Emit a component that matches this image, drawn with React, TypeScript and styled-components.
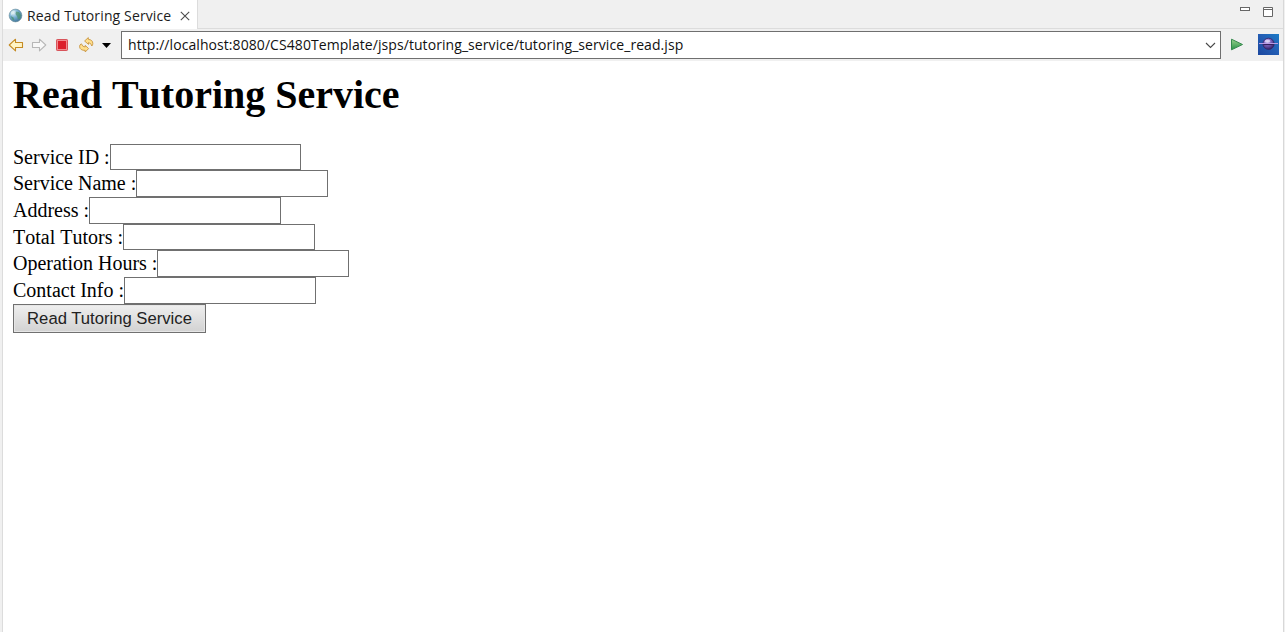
import React from 'react';
import styled, { createGlobalStyle } from 'styled-components';

const GlobalStyle = createGlobalStyle`
  *, *::before, *::after { box-sizing: border-box; }
  body { margin: 0; background: #f0f0f0; overflow: hidden; }
`;

const Frame = styled.div`
  height: 632px;
  width: 1285px;
  padding: 0 1px 0 2px;
  background: #f0f0f0;
`;

const View = styled.main`
  height: 100%;
  display: flex;
  flex-direction: column;
  border-left: 1px solid #dcdcdc;
  border-right: 1px solid #d8d8d8;
  background: #fff;
  font-kerning: none;
`;

const TabBar = styled.header`
  height: 29px;
  display: flex;
  justify-content: space-between;
  background: #f0f0f0;
`;

const Tab = styled.div`
  width: 195px;
  height: 29px;
  display: flex;
  align-items: center;
  padding: 2px 0 0 5px;
  background: #fff;
  border-right: 1px solid #dcdcdc;
`;

const TabTitle = styled.span`
  width: 145px;
  margin-left: 4px;
  margin-right: 8px;
  white-space: nowrap;
  font: 14px/20px "Open Sans", sans-serif;
  font-kerning: none;
  letter-spacing: 0.13px;
  color: #1c1c1c;
`;

const WindowActions = styled.div`
  flex: 1;
  display: flex;
  justify-content: flex-end;
  gap: 12px;
  padding: 6px 9px 0 0;
  border-bottom: 1px solid #dcdcdc;
`;

const Toolbar = styled.nav`
  height: 32px;
  display: flex;
  align-items: center;
  background: #f0f0f0;
`;

const Tools = styled.div`
  width: 118px;
  display: flex;
  align-items: center;
  gap: 7px;
  padding-left: 5px;
`;

const AddressBox = styled.div`
  width: 1100px;
  height: 28px;
  display: flex;
  align-items: center;
  justify-content: space-between;
  padding: 0 4px 0 6px;
  border: 1px solid #6f6f6f;
  background: #fff;
`;

const Url = styled.span`
  white-space: nowrap;
  font: 14px/20px "Open Sans", sans-serif;
  font-kerning: none;
  letter-spacing: 0.07px;
  color: #111;
`;

const EndTools = styled.div`
  display: flex;
  align-items: center;
  gap: 14px;
  padding: 0 0 1px 9px;
`;

const Page = styled.section`
  padding: 11px 10px 0;
  font: 20px/23px "Liberation Serif", serif;
  font-kerning: none;
  color: #000;
`;

const Title = styled.h1`
  margin: 0 0 25.7px;
  font-size: 40px;
  line-height: 46px;
  font-weight: bold;
`;

const Field = styled.label`
  height: 26.67px;
  display: flex;
  align-items: flex-start;
  white-space: nowrap;
`;

const Caption = styled.span`
  padding-top: 2px;
`;

const TextInput = styled.input`
  width: 191.5px;
  height: 26.67px;
  margin: 0;
  padding: 2px;
  border: 1px solid #707070;
  border-radius: 0;
  background: #fff;
  outline: none;
`;

const Submit = styled.button`
  display: block;
  width: 193px;
  height: 29px;
  margin: 0;
  padding: 1px 0 0;
  border: 1px solid #707070;
  border-radius: 0;
  background: linear-gradient(#efefef, #d2d2d2);
  box-shadow: inset 0 0 0 1px #e6e6e6;
  color: #222;
  font: 16.67px/20px "Liberation Sans", sans-serif;
  white-space: nowrap;
`;

const Globe = () => (
  <svg width="15" height="15" viewBox="0 0 15 15">
    <defs>
      <radialGradient id="globe" cx=".35" cy=".3" r=".75">
        <stop offset="0" stopColor="#e2f2f8" />
        <stop offset=".5" stopColor="#74add0" />
        <stop offset="1" stopColor="#3f7399" />
      </radialGradient>
    </defs>
    <circle cx="7.5" cy="7.5" r="6.4" fill="url(#globe)" stroke="#6b8d99" strokeWidth=".6" />
    <path d="M8 3.5l3 .5 2 3-1 3.5-2 1-.8-3L7.5 6ZM2.5 8l3 1.5 1 3-2-.8Z" fill="#4c9270" opacity=".75" />
    <path d="M3 4q2-2 4-1l-2 3-2 1Z" fill="#e7f5f2" opacity=".65" />
  </svg>
);

const CloseIcon = () => (
  <svg width="10" height="10" viewBox="0 0 10 10">
    <path d="m.8.8 8.4 8.4m0-8.4L.8 9.2" stroke="#4c4c4c" strokeWidth="1.1" />
  </svg>
);

const MinimizeIcon = () => (
  <svg width="11" height="12" viewBox="0 0 11 12">
    <rect x=".5" y="1.5" width="9" height="3" fill="#fff" stroke="#666" />
  </svg>
);

const MaximizeIcon = () => (
  <svg width="11" height="12" viewBox="0 0 11 12">
    <path d="M.5 1.5h9v9h-9ZM.5 3.5h9" fill="#fff" stroke="#666" />
  </svg>
);

const Arrow = ({ forward = false }: { forward?: boolean }) => (
  <svg width="16" height="14" viewBox="0 0 16 14">
    <path
      d={forward ? 'M1.5 4.5h7V1.2L14.8 7l-6.3 5.8V9.5h-7Z' : 'M14.5 4.5h-7V1.2L1.2 7l6.3 5.8V9.5h7Z'}
      fill={forward ? '#f8f8f8' : '#fff4c5'}
      stroke={forward ? '#b7b7b7' : '#c58b24'}
      strokeWidth="1.1"
      strokeLinejoin="round"
    />
  </svg>
);

const StopIcon = () => (
  <svg width="16" height="14" viewBox="0 0 16 14">
    <rect x="2.5" y="1.5" width="11" height="11" rx=".7" fill="#f08c90" stroke="#d8545a" />
    <rect x="4" y="3" width="8" height="8" fill="#dc202c" />
  </svg>
);

const RefreshIcon = () => (
  <svg width="18" height="18" viewBox="0 0 18 18">
    <g fill="#ffdf8c" stroke="#c99540" strokeWidth=".9" strokeLinejoin="round">
      <path d="M7.6 5 11.3 1.6V3.3Q15.8 3.8 15.8 7.5 15.8 9 14.8 10 14.2 7 11.5 6.6V8.4Z" />
      <path d="M11.6 12.6 8.2 9.4V11Q5.4 11 4.4 7.8 2.4 8.6 2.6 10.8 3 14.4 8.2 14.4V16Z" />
    </g>
  </svg>
);

const MenuArrow = () => (
  <svg width="9" height="5" viewBox="0 0 9 5"><path d="M0 0h9L4.5 5Z" fill="#000" /></svg>
);

const Chevron = () => (
  <svg width="11" height="7" viewBox="0 0 11 7">
    <path d="m1 1 4.5 4.5L10 1" fill="none" stroke="#484848" strokeWidth="1.1" />
  </svg>
);

const GoIcon = () => (
  <svg width="14" height="13" viewBox="0 0 14 13">
    <defs>
      <linearGradient id="go" x1="0" y1="0" x2="0" y2="1">
        <stop stopColor="#9bd28d" /><stop offset="1" stopColor="#279247" />
      </linearGradient>
    </defs>
    <path d="M1.5 1.2v10.6l11-5.3Z" fill="url(#go)" stroke="#34894d" strokeLinejoin="round" />
  </svg>
);

const BrowserLogo = () => (
  <svg width="21" height="21" viewBox="0 0 21 21">
    <defs>
      <linearGradient id="sky" x1="0" y1="1" x2="1" y2="0">
        <stop stopColor="#1b479f" /><stop offset=".55" stopColor="#245fb5" /><stop offset="1" stopColor="#1b7bc6" />
      </linearGradient>
      <radialGradient id="planet" cx=".4" cy=".3" r=".75">
        <stop stopColor="#d3c5f1" /><stop offset=".4" stopColor="#8168c2" /><stop offset="1" stopColor="#2c195f" />
      </radialGradient>
    </defs>
    <path d="M0 0h21v21H0Z" fill="url(#sky)" />
    <circle cx="10.5" cy="9.8" r="5.6" fill="url(#planet)" stroke="#352364" strokeWidth=".8" />
    <path d="M5.2 10.2h10.6" stroke="#33205e" strokeWidth="1.8" />
    <path d="M1 9.5h19" stroke="#b69be4" strokeWidth="1" />
    <ellipse cx="9.5" cy="7.2" rx="2.8" ry="1.4" fill="#e0d8f5" opacity=".75" />
  </svg>
);

const fields = ['Service ID', 'Service Name', 'Address', 'Total Tutors', 'Operation Hours', 'Contact Info'];

export default function App() {
  return (
    <>
      <GlobalStyle />
      <Frame>
        <View>
          <TabBar>
            <Tab><Globe /><TabTitle>Read Tutoring Service</TabTitle><CloseIcon /></Tab>
            <WindowActions><MinimizeIcon /><MaximizeIcon /></WindowActions>
          </TabBar>
          <Toolbar>
            <Tools><Arrow /><Arrow forward /><StopIcon /><RefreshIcon /><MenuArrow /></Tools>
            <AddressBox>
              <Url>http://localhost:8080/CS480Template/jsps/tutoring_service/tutoring_service_read.jsp</Url>
              <Chevron />
            </AddressBox>
            <EndTools><GoIcon /><BrowserLogo /></EndTools>
          </Toolbar>
          <Page>
            <Title>Read Tutoring Service</Title>
            {fields.map((name) => (
              <Field key={name}><Caption>{name} :</Caption><TextInput type="text" /></Field>
            ))}
            <Submit type="button">Read Tutoring Service</Submit>
          </Page>
        </View>
      </Frame>
    </>
  );
}
